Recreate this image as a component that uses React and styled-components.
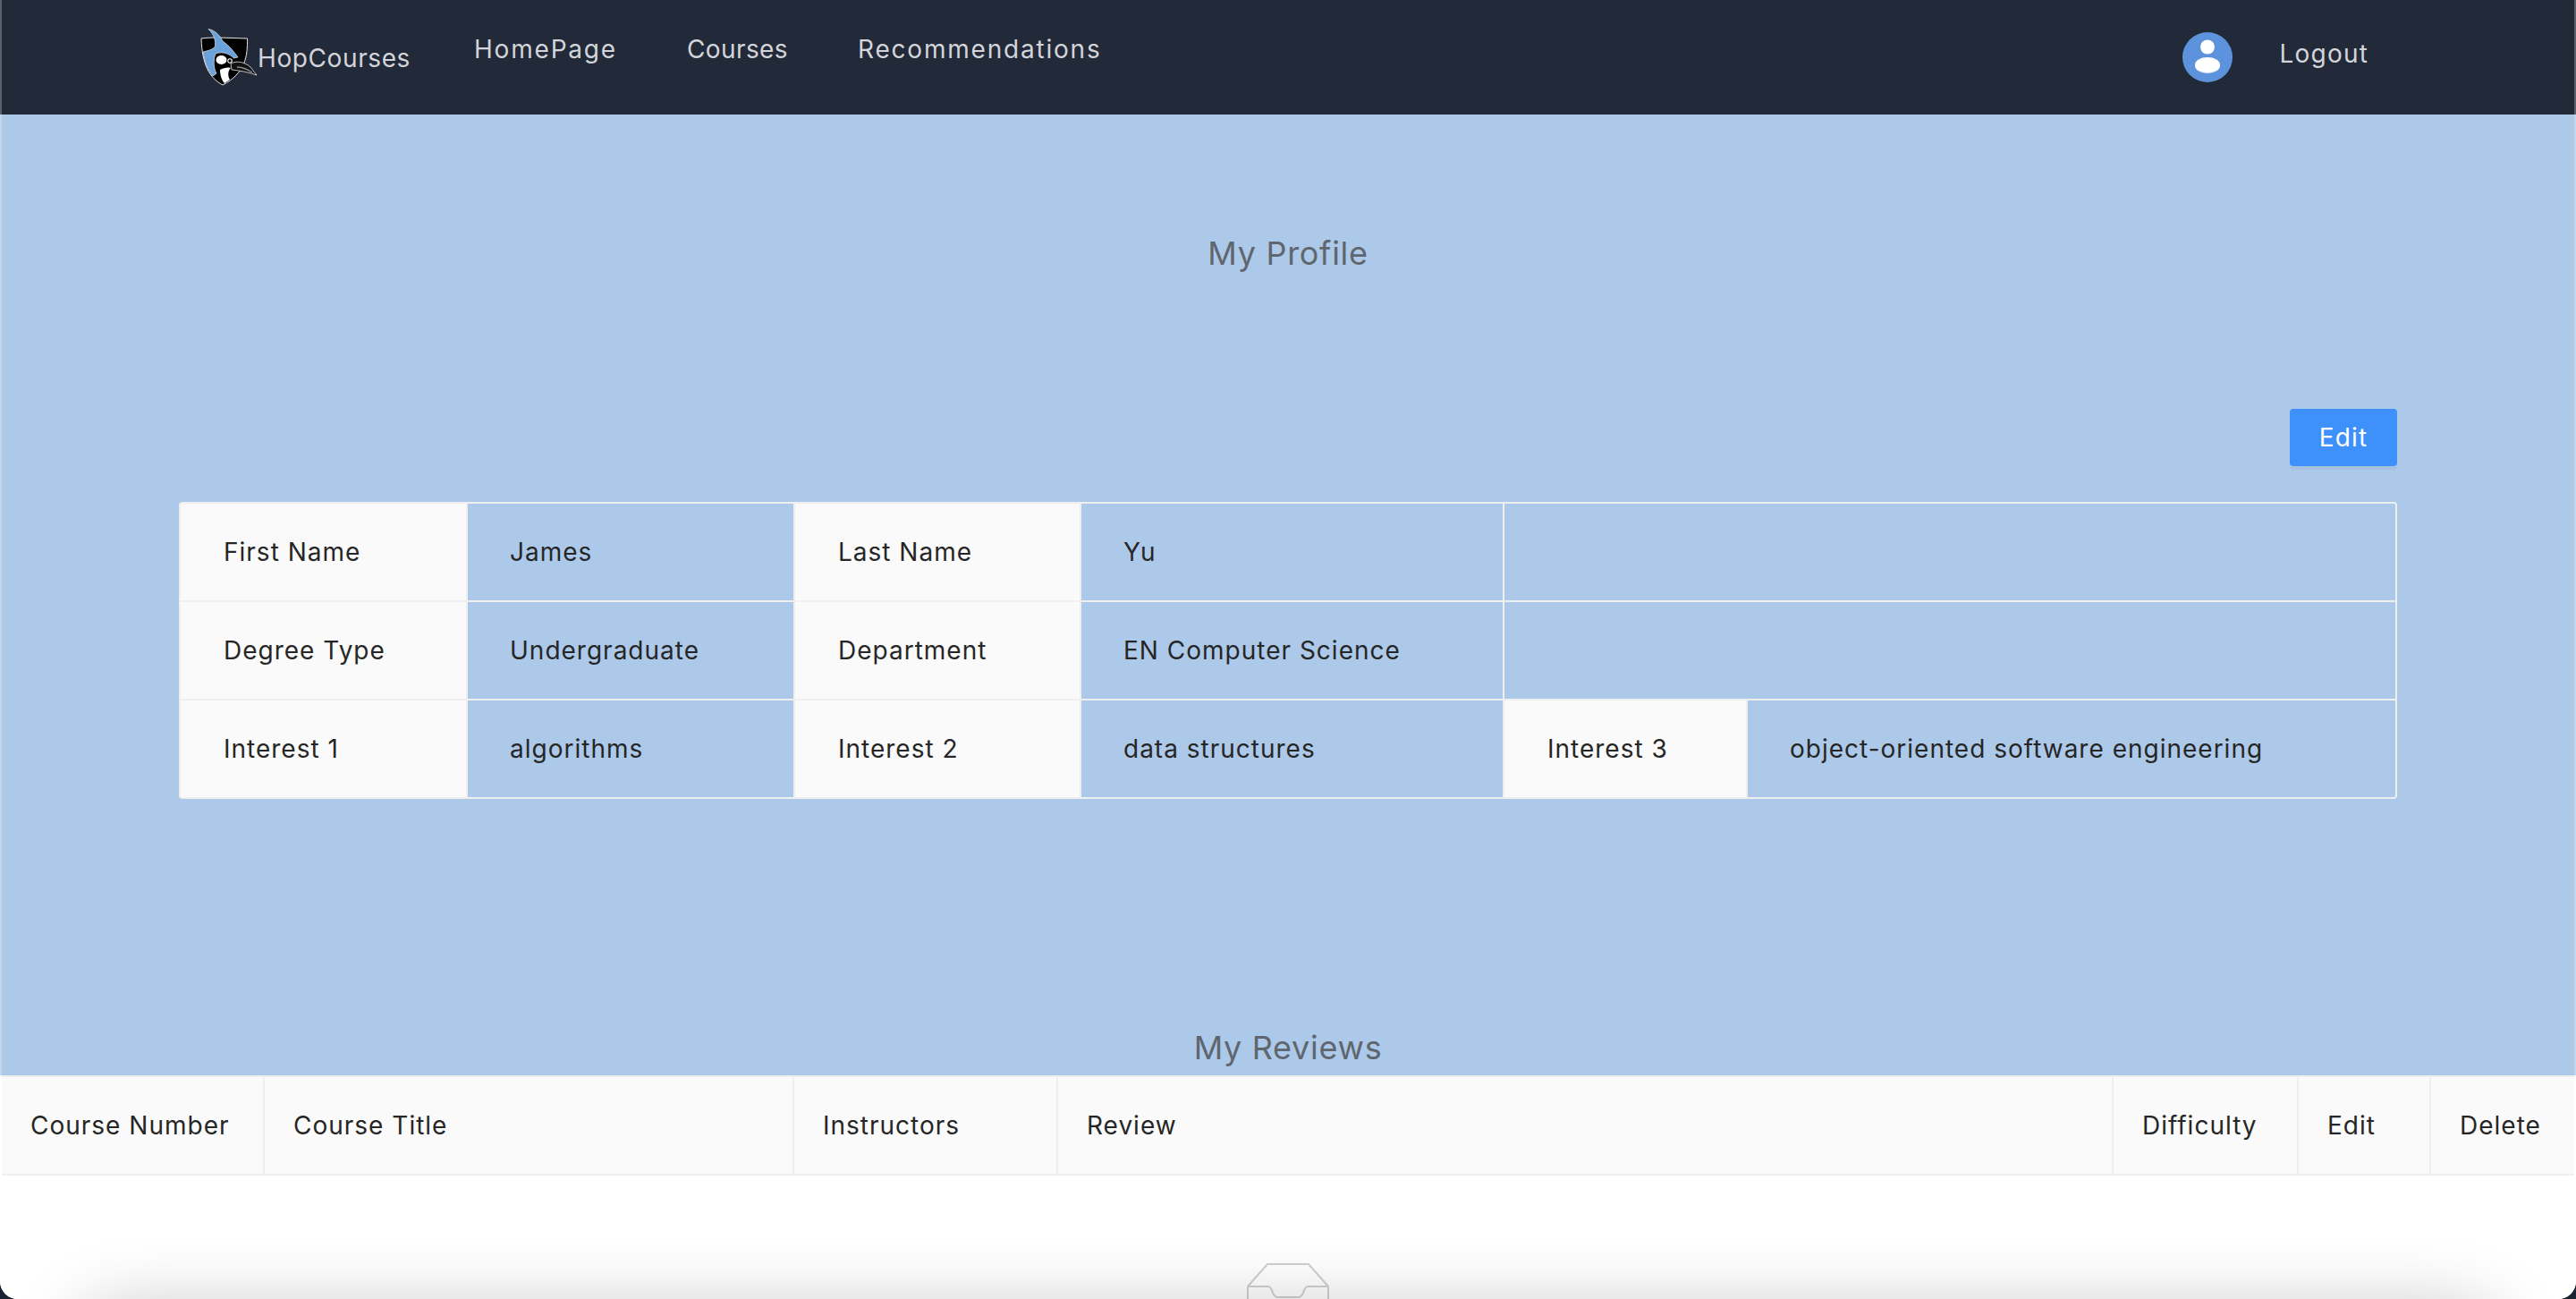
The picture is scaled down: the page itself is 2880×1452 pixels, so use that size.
import React from 'react';
import styled, { createGlobalStyle } from 'styled-components';

const GlobalStyle = createGlobalStyle`
html, body {
    margin: 0;
    padding: 0;
    background: #1b2231;
}
body {
    font-family: "Inter", "Open Sans", sans-serif;
    overflow: hidden;
}
`

const Frame = styled.div`
width: 2880px;
height: 1452px;
display: flex;
flex-direction: column;
overflow: hidden;
border-radius: 0 0 20px 20px;
background: #fff;
`

const Header = styled.header`
height: 128px;
flex: none;
display: flex;
align-items: center;
box-sizing: border-box;
padding: 0 230px 0 222px;
border-left: 2px solid #5a606c;
border-right: 2px solid #5a606c;
background: #222938;
color: #d3d5da;
font-size: 28px;
letter-spacing: 1.2px;
`

const Brand = styled.div`
display: flex;
align-items: center;
width: 236px;
letter-spacing: 0.6px;
`

const BrandName = styled.span`
margin-top: 1px;
`

const Nav = styled.nav`
display: flex;
gap: 78px;
margin-left: 70px;
flex: 1;
`

const NavLink = styled.a`
margin-top: -18px;
letter-spacing: ${props => props.$track || 1.8}px;
`

const Avatar = styled.div`
width: 56px;
height: 56px;
border-radius: 50%;
margin-right: 53px;
background: #5c93dc;
`

const Logout = styled.a`
margin-top: -9px;
`

const Profile = styled.main`
height: 1074px;
flex: none;
display: flex;
flex-direction: column;
box-sizing: border-box;
border-left: 2px solid #c3d6ee;
border-right: 2px solid #c3d6ee;
background: #adc9ea;
`

const Title = styled.h2`
margin: 0;
font-size: 36px;
font-weight: 400;
line-height: 44px;
text-align: center;
color: #60666e;
letter-spacing: 0.7px;
`

const ProfileTitle = styled(Title)`
margin-top: 133px;
`

const EditRow = styled.div`
display: flex;
justify-content: flex-end;
margin: 152px 198px 40px 0;
`

const EditButton = styled.button`
width: 120px;
height: 64px;
border: 0;
border-radius: 4px;
background: #3e90fa;
color: #fff;
font: 400 28px "Inter", sans-serif;
letter-spacing: 1.1px;
box-shadow: 0 4px 0 rgba(0, 0, 0, 0.04);
`

const DetailTable = styled.table`
width: 2480px;
margin-left: 198px;
border-collapse: separate;
border-spacing: 0;
table-layout: fixed;
border: 2px solid #efefef;
border-radius: 4px;
font-size: 28px;
letter-spacing: 1px;
color: #262626;
`

const Cell = styled.td`
height: 110px;
padding: 0 0 0 ${props => props.$label ? 48 : 47}px;
box-sizing: border-box;
background: ${props => props.$label ? '#fafafa' : 'transparent'};
border-right: 2px solid #efefef;
border-bottom: 2px solid #efefef;
&:last-child {
    border-right: 0;
}
tr:last-child & {
    height: 108px;
    border-bottom: 0;
}
`

const ReviewsTitle = styled(Title)`
margin-top: 256px;
`

const Reviews = styled.section`
position: relative;
flex: 1;
overflow: hidden;
box-sizing: border-box;
padding: 0 2px;
background: #fff;
`

const ReviewsTable = styled.table`
width: 2876px;
height: 112px;
border-collapse: separate;
border-spacing: 0;
table-layout: fixed;
font-size: 28px;
letter-spacing: 1px;
color: #262626;
`

const HeadCell = styled.th`
padding: 0 0 0 32px;
box-sizing: border-box;
font-weight: 400;
text-align: left;
background: #fafafa;
border-top: 2px solid #efefef;
border-right: 2px solid #efefef;
border-bottom: 2px solid #efefef;
&:last-child {
    border-right: 0;
}
`

const EmptyState = styled.div`
display: flex;
justify-content: center;
padding-top: 98px;
/* the drop shadow of the card below the fold */
&::after {
    content: "";
    position: absolute;
    left: 90px;
    right: 90px;
    top: 262px;
    height: 100px;
    border-radius: 40px;
    box-shadow: 0 0 80px 0 rgba(0, 0, 0, 0.24);
}
`

const Logo = () => (
    <svg width="64" height="64" viewBox="0 0 64 64">
        <path d="M1 11 C8 10 14 10 20 10 L52.5 11 C53 31 50 50 25 63 C10 55 2 40 1 11Z" fill="#000" stroke="#e6e6e6" strokeWidth="1" />
        <path d="M9 0.5 C17 2 22 8 25 14 C32 19 37 25 42 32 L37 33 C29 26 22 26 17 28 C14 36 15 45 18 50 L14 53 C8 46 4 36 3 26 C7 25 12 24 16 21 C18 14 15 6 9 0.5Z" fill="#6aa2dc" stroke="#e6e6e6" strokeWidth="0.7" />
        <path d="M16 34 C17 27 29 25 37 33 L37 42 C29 44 20 45 17 40Z" fill="#000" />
        <ellipse cx="23.5" cy="35" rx="6" ry="5" fill="#fff" />
        <circle cx="33" cy="36" r="2.8" fill="#fff" />
        <circle cx="33" cy="36" r="1.7" fill="#000" />
        <path d="M22 46 C26 44 30 43 34 44 C30 48 31 54 33 57 L27 61 C24 58 22 52 22 46Z" fill="#fff" />
        <path d="M34 39 C42 35 50 38 56 43 L63 52 C55 49 45 47 35 46Z" fill="#111" stroke="#e6e6e6" strokeWidth="0.8" />
        <path d="M41 43 C47 43 52 45 58 49" fill="none" stroke="#8d939c" strokeWidth="1.4" />
    </svg>
)

const UserIcon = () => (
    <svg width="56" height="56" viewBox="0 0 56 56">
        <circle cx="28" cy="16.5" r="8" fill="#fff" />
        <ellipse cx="28" cy="37.5" rx="14" ry="8.5" fill="#e6ebf2" />
        <ellipse cx="28" cy="36.5" rx="14" ry="8.5" fill="#fff" />
    </svg>
)

const InboxIcon = () => (
    <svg width="92" height="60" viewBox="0 0 92 60" fill="none" stroke="#d0d0d0" strokeWidth="2">
        <path d="M1 26 L23 1 H69 L91 26 V60 H1 Z" />
        <path d="M1 26 H24 C29 26 28 38 34 38 H58 C64 38 63 26 68 26 H91" />
    </svg>
)

const firstCols = [321, 366, 320, 473, 272, 724];
const reviewCols = [
    { name: 'Course Number', width: 294 },
    { name: 'Course Title', width: 592 },
    { name: 'Instructors', width: 295 },
    { name: 'Review', width: 1180 },
    { name: 'Difficulty', width: 207 },
    { name: 'Edit', width: 148 },
    { name: 'Delete', width: 160 },
];

export default class App extends React.Component {
    render() {
        return (
            <Frame>
                <GlobalStyle />
                <Header>
                    <Brand>
                        <Logo />
                        <BrandName>HopCourses</BrandName>
                    </Brand>
                    <Nav>
                        <NavLink>HomePage</NavLink>
                        <NavLink $track={0.4}>Courses</NavLink>
                        <NavLink>Recommendations</NavLink>
                    </Nav>
                    <Avatar><UserIcon /></Avatar>
                    <Logout>Logout</Logout>
                </Header>
                <Profile>
                    <ProfileTitle>My Profile</ProfileTitle>
                    <EditRow><EditButton>Edit</EditButton></EditRow>
                    <DetailTable>
                        <colgroup>
                            {firstCols.map((w, i) => <col key={i} width={w} />)}
                        </colgroup>
                        <tbody>
                            <tr>
                                <Cell $label>First Name</Cell>
                                <Cell>James</Cell>
                                <Cell $label>Last Name</Cell>
                                <Cell>Yu</Cell>
                                <Cell colSpan="2"></Cell>
                            </tr>
                            <tr>
                                <Cell $label>Degree Type</Cell>
                                <Cell>Undergraduate</Cell>
                                <Cell $label>Department</Cell>
                                <Cell>EN Computer Science</Cell>
                                <Cell colSpan="2"></Cell>
                            </tr>
                            <tr>
                                <Cell $label>Interest 1</Cell>
                                <Cell>algorithms</Cell>
                                <Cell $label>Interest 2</Cell>
                                <Cell>data structures</Cell>
                                <Cell $label>Interest 3</Cell>
                                <Cell>object-oriented software engineering</Cell>
                            </tr>
                        </tbody>
                    </DetailTable>
                    <ReviewsTitle>My Reviews</ReviewsTitle>
                </Profile>
                <Reviews>
                    <ReviewsTable>
                        <colgroup>
                            {reviewCols.map(c => <col key={c.name} width={c.width} />)}
                        </colgroup>
                        <thead>
                            <tr>
                                {reviewCols.map(c => <HeadCell key={c.name}>{c.name}</HeadCell>)}
                            </tr>
                        </thead>
                    </ReviewsTable>
                    <EmptyState><InboxIcon /></EmptyState>
                </Reviews>
            </Frame>
        )
    }
}
